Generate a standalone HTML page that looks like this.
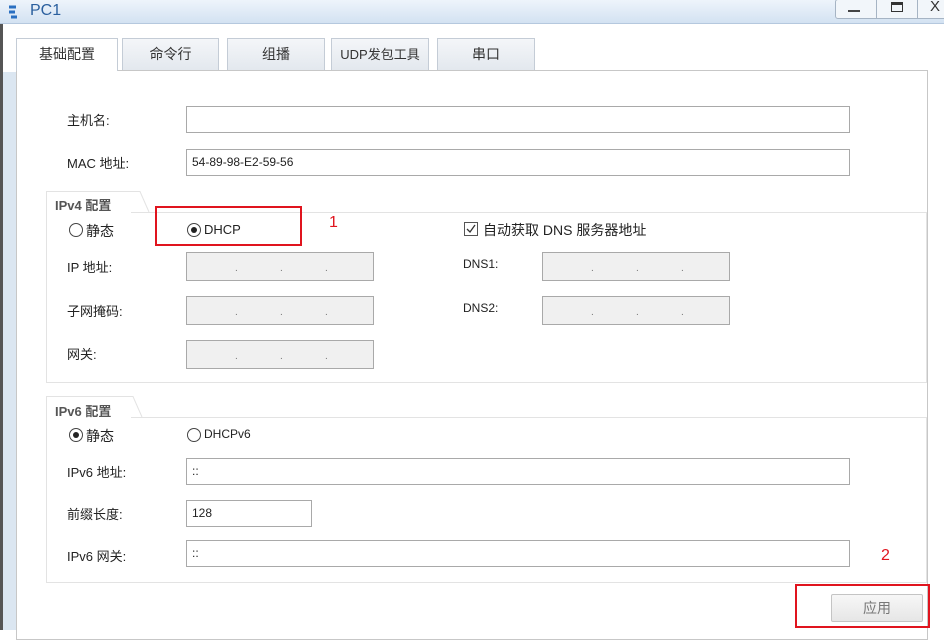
<!DOCTYPE html>
<html><head><meta charset="utf-8"><style>
*{margin:0;padding:0;box-sizing:border-box}
body{width:944px;height:630px;overflow:hidden;background:#fff;font-family:"Liberation Sans","Noto Sans CJK SC",sans-serif;font-size:13px;color:#222;position:relative}
.a{position:absolute}
.title{left:0;top:0;width:944px;height:24px;background:linear-gradient(#eef4fb,#d3e2f2);border-bottom:1px solid #b5c8de}
.tab{top:38px;height:32px;border:1px solid #c4ccd6;border-bottom:none;background:linear-gradient(#f4f6f9,#e3e8ee);text-align:center;line-height:31px;font-size:14px;color:#333}
.in{border:1px solid #a9a9a9;background:#fff;height:27px;font-size:12px;line-height:25px;padding-left:5px}
.ip{border:1px solid #a9a9a9;background:#f0f0f0;height:29px}
.ip span{position:absolute;top:10px;font-size:10px;color:#777}
.lbl{font-size:13px;color:#222}
.grp{border:1px solid #e3e3e3}
.rad{width:14px;height:14px;border:1px solid #444;border-radius:50%;background:#fff}
.rad.on::after{content:"";position:absolute;left:3px;top:3px;width:6px;height:6px;border-radius:50%;background:#222}
.red{border:2px solid #e0141e}
</style></head><body>
<div class="a title"></div>
<svg class="a" style="left:6px;top:4px" width="22" height="18" viewBox="0 0 22 18"><path d="M3 3h7M3 8h6M5 13h6" stroke="#2a6fc1" stroke-width="3" fill="none"/></svg>
<div class="a" style="left:30px;top:2px;font-size:16px;color:#2a5f9e">PC1</div>
<div class="a" style="left:835px;top:-1px;width:120px;height:20px;border:1px solid #a6b4c4;border-radius:3px;background:#f2f6fa"></div>
<div class="a" style="left:876px;top:0;width:1px;height:18px;background:#a6b4c4"></div>
<div class="a" style="left:917px;top:0;width:1px;height:18px;background:#a6b4c4"></div>
<div class="a" style="left:848px;top:10px;width:12px;height:2px;background:#444"></div>
<div class="a" style="left:891px;top:2px;width:12px;height:10px;border:1px solid #333;border-top-width:3px"></div>
<div class="a" style="left:930px;top:-2px;font-size:15px;color:#333">X</div>
<div class="a" style="left:0;top:24px;width:3px;height:606px;background:#555"></div>
<div class="a" style="left:3px;top:72px;width:13px;height:558px;background:#dbe6f1"></div>
<div class="a" style="left:16px;top:70px;width:912px;height:570px;border:1px solid #c7c7c7;background:#fff"></div>
<div class="a tab" style="left:16px;width:102px;height:33px;background:#fff;z-index:2">基础配置</div>
<div class="a tab" style="left:122px;width:97px">命令行</div>
<div class="a tab" style="left:227px;width:98px">组播</div>
<div class="a tab" style="left:331px;width:98px;font-size:13px">UDP发包工具</div>
<div class="a tab" style="left:437px;width:98px">串口</div>

<div class="a lbl" style="left:67px;top:110px">主机名:</div>
<div class="a in" style="left:186px;top:106px;width:664px"></div>
<div class="a lbl" style="left:67px;top:153px">MAC 地址:</div>
<div class="a in" style="left:186px;top:149px;width:664px">54-89-98-E2-59-56</div>

<div class="a grp" style="left:46px;top:212px;width:881px;height:171px"></div>
<div class="a" style="left:46px;top:191px;width:85px;height:22px;border:1px solid #e3e3e3;border-bottom:none;border-right:none;background:#fff"></div>
<svg class="a" style="left:130px;top:191px" width="20" height="22"><path d="M0 .5L10 .5L19 21" stroke="#e3e3e3" fill="#fff"/></svg>
<div class="a" style="left:55px;top:195px;font-size:13px;color:#555;font-weight:bold">IPv4 配置</div>
<div class="a rad" style="left:69px;top:223px"></div><div class="a lbl" style="left:86px;top:221px;font-size:14px">静态</div>
<div class="a rad on" style="left:187px;top:223px"></div><div class="a lbl" style="left:204px;top:222px">DHCP</div>
<div class="a red" style="left:155px;top:206px;width:147px;height:40px"></div>
<div class="a" style="left:329px;top:214px;color:#e0141e;font-size:16px">1</div>
<div class="a" style="left:464px;top:222px;width:14px;height:14px;border:1px solid #555"></div>
<svg class="a" style="left:465px;top:223px" width="12" height="12"><path d="M2 6l3 3 5-7" stroke="#333" stroke-width="1.3" fill="none"/></svg>
<div class="a lbl" style="left:483px;top:220px;font-size:14px">自动获取 DNS 服务器地址</div>

<div class="a lbl" style="left:67px;top:257px">IP 地址:</div>
<div class="a ip" style="left:186px;top:252px;width:188px"><span style="left:48px">.</span><span style="left:93px">.</span><span style="left:138px">.</span></div>
<div class="a lbl" style="left:67px;top:301px">子网掩码:</div>
<div class="a ip" style="left:186px;top:296px;width:188px"><span style="left:48px">.</span><span style="left:93px">.</span><span style="left:138px">.</span></div>
<div class="a lbl" style="left:67px;top:344px">网关:</div>
<div class="a ip" style="left:186px;top:340px;width:188px"><span style="left:48px">.</span><span style="left:93px">.</span><span style="left:138px">.</span></div>
<div class="a lbl" style="left:463px;top:257px;font-size:12px">DNS1:</div>
<div class="a ip" style="left:542px;top:252px;width:188px"><span style="left:48px">.</span><span style="left:93px">.</span><span style="left:138px">.</span></div>
<div class="a lbl" style="left:463px;top:301px;font-size:12px">DNS2:</div>
<div class="a ip" style="left:542px;top:296px;width:188px"><span style="left:48px">.</span><span style="left:93px">.</span><span style="left:138px">.</span></div>

<div class="a grp" style="left:46px;top:417px;width:881px;height:166px"></div>
<div class="a" style="left:46px;top:396px;width:85px;height:22px;border:1px solid #e3e3e3;border-bottom:none;border-right:none;background:#fff"></div>
<svg class="a" style="left:130px;top:396px" width="20" height="22"><path d="M0 .5L3 .5L12 21" stroke="#e3e3e3" fill="#fff"/></svg>
<div class="a" style="left:55px;top:401px;font-size:13px;color:#555;font-weight:bold">IPv6 配置</div>
<div class="a rad on" style="left:69px;top:428px"></div><div class="a lbl" style="left:86px;top:426px;font-size:14px">静态</div>
<div class="a rad" style="left:187px;top:428px"></div><div class="a lbl" style="left:204px;top:427px;font-size:12px">DHCPv6</div>
<div class="a lbl" style="left:67px;top:462px">IPv6 地址:</div>
<div class="a in" style="left:186px;top:458px;width:664px">::</div>
<div class="a lbl" style="left:67px;top:504px">前缀长度:</div>
<div class="a in" style="left:186px;top:500px;width:126px">128</div>
<div class="a lbl" style="left:67px;top:546px">IPv6 网关:</div>
<div class="a in" style="left:186px;top:540px;width:664px">::</div>

<div class="a" style="left:881px;top:547px;color:#e0141e;font-size:16px">2</div>
<div class="a red" style="left:795px;top:584px;width:135px;height:44px"></div>
<div class="a" style="left:831px;top:594px;width:92px;height:28px;border:1px solid #c4c4c4;border-radius:2px;background:linear-gradient(#f7f7f7,#e6e6e6);text-align:center;line-height:26px;color:#777;font-size:14px">应用</div>
</body></html>
